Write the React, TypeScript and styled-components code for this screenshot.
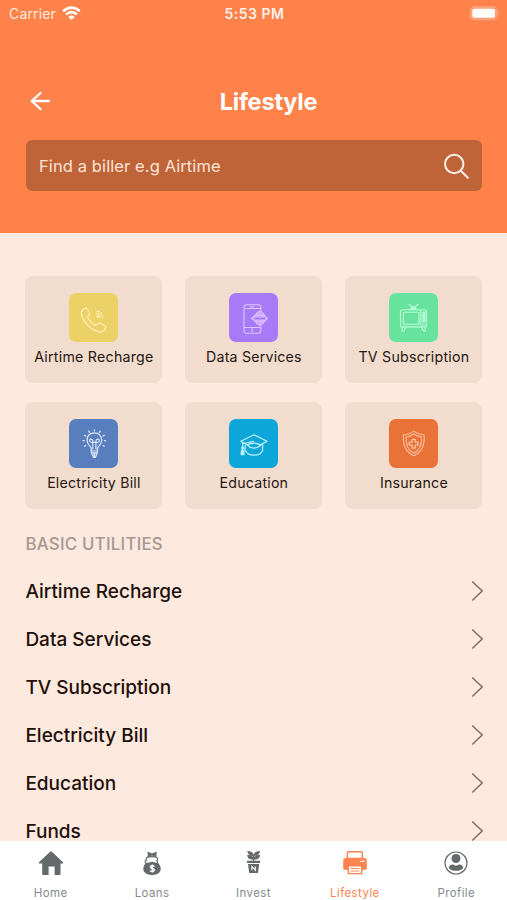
import React from "react";
import styled, { createGlobalStyle } from "styled-components";

const GlobalStyle = createGlobalStyle`
  * { box-sizing: border-box; }
  body { margin: 0; background: #fee9de; font-family: Inter, "Liberation Sans", sans-serif; overflow: hidden; }
`;

const Screen = styled.div`
  width: 507px;
  height: 900px;
  display: flex;
  flex-direction: column;
  background: #fee9de;
  overflow: hidden;
`;

const Header = styled.header`
  height: 233px;
  flex: none;
  background: #ff824b;
  color: #fff;
`;

const StatusBar = styled.div`
  display: grid;
  grid-template-columns: 1fr auto 1fr;
  align-items: center;
  height: 27px;
  padding: 0 7px 0 9px;
`;

const Carrier = styled.div`
  display: flex;
  align-items: center;
  gap: 6px;
  font-size: 14px;
  letter-spacing: 0.15px;
  color: #ffeadf;
`;

const Clock = styled.div`
  font-size: 14px;
  font-weight: 600;
  letter-spacing: 0.5px;
  color: #fff1e9;
`;

const BatterySlot = styled.div`
  display: flex;
  justify-content: flex-end;
`;

const TitleBar = styled.div`
  display: grid;
  grid-template-columns: 28px 1fr 28px;
  align-items: center;
  height: 40px;
  margin: 54px 25px 0 26px;
`;

const Title = styled.h1`
  margin: 0;
  text-align: center;
  font-size: 23.5px;
  line-height: 30px;
  font-weight: 700;
  letter-spacing: -0.2px;
  padding-left: 29px;
  padding-top: 1px;
`;

const Search = styled.div`
  display: flex;
  align-items: center;
  justify-content: space-between;
  height: 51px;
  margin: 19px 25px 0 25.5px;
  padding: 0 12px 0 13.5px;
  border-radius: 6px;
  background: #bf6339;
  color: #ffe5d8;
  font-size: 16.5px;
`;

const SearchText = styled.span`
  letter-spacing: 0.1px;
`;

const Content = styled.main`
  flex: 1;
  min-height: 0;
  overflow: hidden;
  padding: 43px 24.5px 0 25.4px;
`;

const Grid = styled.section`
  display: grid;
  grid-template-columns: repeat(3, 137px);
  grid-auto-rows: 107px;
  gap: 19px 23px;
`;

const Card = styled.div`
  display: flex;
  flex-direction: column;
  align-items: center;
  padding-top: 17px;
  border-radius: 8px;
  background: #f2dcce;
`;

const Tile = styled.div<{ $color: string }>`
  width: 49px;
  height: 49px;
  border-radius: 7px;
  background: ${(p) => p.$color};
  svg { display: block; }
`;

const CardLabel = styled.div<{ $track: number }>`
  margin-top: 5px;
  font-size: 14.2px;
  line-height: 20px;
  font-weight: 400;
  letter-spacing: ${(p) => p.$track}px;
  white-space: nowrap;
  color: #251711;
`;

const SectionTitle = styled.h2`
  margin: 22px 0 0;
  font-size: 16.8px;
  line-height: 26px;
  font-weight: 500;
  letter-spacing: 0.27px;
  color: #a69791;
`;

const Row = styled.div`
  display: flex;
  align-items: center;
  justify-content: space-between;
  height: 48px;
  font-size: 19px;
  font-weight: 500;
  color: #210f09;
`;

const List = styled.div`
  padding-top: 10px;
`;

const RowLabel = styled.span`
  letter-spacing: 0px;
`;

const Nav = styled.nav`
  flex: none;
  height: 59px;
  display: grid;
  grid-template-columns: repeat(5, 1fr);
  background: #fff;
`;

const NavItem = styled.div<{ $active?: boolean }>`
  display: flex;
  flex-direction: column;
  align-items: center;
  padding-top: 8px;
  color: ${(p) => (p.$active ? "#fd8350" : "#64696b")};
`;

const NavLabel = styled.span<{ $active?: boolean }>`
  margin-top: 8px;
  font-size: 11.5px;
  line-height: 16px;
  letter-spacing: 0.4px;
  color: ${(p) => (p.$active ? "#fd8350" : "#85898b")};
`;

const Wifi = () => (
  <svg width="19" height="15" viewBox="0 0 19 15" fill="none" stroke="#fff" strokeWidth="2.5">
    <path d="M1.1 5.3Q9.5-2 17.9 5.3" />
    <path d="M4 8.5Q9.5 3.8 15 8.5" />
    <path d="M6.3 10.9Q9.5 8.3 12.7 10.9L9.5 14Z" fill="#fff" stroke="none" />
  </svg>
);

const Battery = () => (
  <svg width="31" height="15" viewBox="0 0 31 15">
    <rect x="1.5" y=".8" width="26.5" height="13" rx="4" fill="#ff9d73" stroke="#ffa883" />
    <rect x="3.3" y="2.8" width="22.7" height="9" rx="2" fill="#fff" />
    <path d="M29 5.2Q31 7.2 29 9.4Z" fill="#ffb18f" />
  </svg>
);

const Back = () => (
  <svg width="28" height="28" viewBox="0 0 28 28" fill="none" stroke="#fff" strokeWidth="2.3" strokeLinecap="round" strokeLinejoin="round">
    <path d="M23 14H6M14.5 6 5.7 14l8.8 8.1" />
  </svg>
);

const SearchIcon = () => (
  <svg width="28" height="28" viewBox="0 0 28 28" fill="none" stroke="#fff0e8" strokeWidth="2" strokeLinecap="round">
    <circle cx="12.2" cy="12" r="9.2" />
    <path d="m18.8 18.7 7 7" />
  </svg>
);

const Chevron = () => (
  <svg width="13" height="22" viewBox="0 0 13 22" fill="none" stroke="#7b6860" strokeWidth="1.3">
    <path d="m2.2 1.5 10 9.5-10 9.5" />
  </svg>
);

const PhoneIcon = () => (
  <svg width="49" height="49" viewBox="0 0 49 49" fill="none" stroke="#fff2bf" strokeWidth="1.1" strokeLinecap="round" strokeLinejoin="round">
    <path d="M15.3 15.4c1.2-.7 2.3-.3 3 .9l2 3.2c.7 1.2.2 2.3-.9 3.1-1.3.9-.7 2.3.3 3.7 1.6 2.2 3.5 4.1 5.8 5.4 1.2.7 2.2.6 3-.4.8-1.1 2-1.5 3.3-.8l3.5 2.1c1.3.8 1.7 2 1 3.2-2 3.4-5.3 4-9 2.3-6.4-2.9-11.2-7.6-14-14.1-1.5-3.6-1.4-6.7 2-8.6ZM27.6 20.6c2 .8 3 2.3 3 4.3M27.6 18c3.5.6 5.6 3.1 6.2 6.9M27.6 22.9c.8.4 1.1 1 1.1 1.8" />
  </svg>
);

const DataIcon = () => (
  <svg width="49" height="49" viewBox="0 0 49 49" fill="none" stroke="#dfc6ff" strokeWidth="1.1">
    <rect x="15" y="11.7" width="16.7" height="28.5" rx="2.4" />
    <path d="M15 15.5h16.7M15 34.5h16.7M20.5 13.8h5M23.3 35v4" />
    <path d="M22 25.5c4.5-1 5.4-7.3 9-7.3 3.7 0 4 6.3 8 7.3-4 1-4.3 6.5-8 6.5s-4.5-5.5-9-6.5Z" fill="#c79fff" />
    <path d="M30.8 18.5v5M30.8 27v4.7M27.7 20.3v3M27.7 27.4v3M34.2 20.3v3M34.2 27.4v3M25.8 22.8h10.4M25.6 28.2h10.8" strokeWidth=".8" />
    <path d="M26 25.5h10" stroke="#a979f4" strokeWidth="1.4" />
  </svg>
);

const TvIcon = () => (
  <svg width="49" height="49" viewBox="0 0 49 49" fill="none" stroke="#b9ffd8" strokeWidth="1.1" strokeLinejoin="round">
    <rect x="11.5" y="16.7" width="26" height="17.2" rx="2" />
    <rect x="14.3" y="19.3" width="15.7" height="12" rx="1" />
    <path d="M31.8 17v17M34 19h2v10h-2ZM35 20v8M33 31.2h3.5M13.7 34l-.9 4h2.1l2-4M32.7 34l1.8 4h2.1l-.9-4M23.8 15.2l-4-4.2M25 15.2l4.3-4.2M20 16.5h8.6M21.5 15.2h6" />
    <circle cx="24.5" cy="15" r="1.5" fill="#b9ffd8" />
  </svg>
);

const BulbIcon = () => (
  <svg width="49" height="49" viewBox="0 0 49 49" fill="none" stroke="#dfeaff" strokeWidth="1.15" strokeLinecap="round">
    <path d="M22.2 32v-2.4c0-2.8-4.2-3.5-4.2-8.6 0-4.3 3.1-7.2 7.4-7.2s7.3 3.1 7.3 7.3c0 4.9-4.2 5.8-4.2 8.6V32Z" />
    <path d="M22.4 32v2.2l2.3 4.2h1.6l2-4.2V32M22.7 33.9h5.3M23.8 30v-6.6c-4.2.8-4.1-4-1.2-3.2 1.1.3 1.3 1.8 1.2 3.2h3.1c-.1-1.5.2-2.9 1.3-3.2 2.9-.8 2.9 4-1.3 3.2V30" />
    <path d="M25.4 35v3" strokeWidth="1.8" />
    <path d="M25.4 10.7v1.2M19.7 12.1l.8 1.3M31.1 12.1l-.8 1.3M15.4 16.3l1.3.8M35.2 16.3l-1.2.8M14 21.6h1.3M35.3 21.6h1.4M15.4 27.3l1.3-.8M35.3 27.3l-1.3-.8" />
  </svg>
);

const CapIcon = () => (
  <svg width="49" height="49" viewBox="0 0 49 49" fill="none" stroke="#bdf2ff" strokeWidth="1.25" strokeLinecap="round" strokeLinejoin="round">
    <path d="M11.8 22.2 25 15.8l13 6.4-6.5 3.7q-7-3.4-13 0ZM18 26q6.5 6.2 14-.1M16.2 26.5v4.7c1.3 2.8 4.5 5 8.9 5 4.6 0 7.6-2.1 8.5-5v-5.4M15 24.5l9.6-2.2M13.7 23.5v8" />
    <path d="M12.4 31.5h2.4l.2 4h-2.8Z" fill="#bdf2ff" />
    <circle cx="13.7" cy="29" r="1" />
  </svg>
);

const ShieldIcon = () => (
  <svg width="49" height="49" viewBox="0 0 49 49" fill="none" stroke="#ffc2a1" strokeWidth="1.05" strokeLinejoin="round">
    <path d="M24.8 12.2c2.8 2.3 6.4 3.5 10.3 3.6.8 9.8-1.5 17.3-10.3 21-8.8-3.7-11.1-11.2-10.3-21 3.9-.1 7.5-1.3 10.3-3.6Z" />
    <path d="M24.8 15c2.3 1.6 4.8 2.6 7.8 2.9.3 7.6-1.6 13.2-7.8 16.3-6.2-3.1-8.1-8.7-7.8-16.3 3-.3 5.5-1.3 7.8-2.9Z" />
    <path d="M23.2 20.3h3v2.9h2.9v3h-2.9v2.9h-3v-2.9h-2.9v-3h2.9Z" strokeWidth="1.3" />
  </svg>
);

const HomeIcon = () => (
  <svg width="28" height="28" viewBox="0 0 28 28" fill="currentColor">
    <path d="M13.1 2.7q.9-.8 1.8 0L26 13.3q1 1-.4 1.1H23.5v10.7q0 1-1 1h-4.9v-8.5h-6v8.5H6.2q-1 0-1-1V14.4H2.4q-1.4-.1-.4-1.1Z" />
  </svg>
);

const LoansIcon = () => (
  <svg width="28" height="28" viewBox="0 0 28 28">
    <path d="M9.5 8.1c2.4-.4 7.2-.6 9.1.2 1.2.7 1 2.4.2 3.3 1.1.3.8 2.5-.2 3H9.4c-2.9-.7-3.3-2.8-.8-3.5-.8-.9-.6-2.6.9-3Z" fill="white" stroke="currentColor" strokeWidth="1.1" />
    <path d="M9.4 2.5 14 4.4l4.8-1.9-.6 6-4.2-2-4 2Z" fill="currentColor" />
    <path d="M7.5 14.3 14 12.8l6.4 1.5c5 6.2 1.6 11.7-6.4 11.7S2.7 20.4 7.5 14.3Z" fill="currentColor" />
    <path d="M16.7 17.4c-4.3-1.8-6 1.1-2.4 2.1 3.8 1 2.2 4-2.4 2.3M14.3 15.6v7.9" fill="none" stroke="#fff" strokeWidth="1.4" />
  </svg>
);

const InvestIcon = () => (
  <svg width="28" height="28" viewBox="0 0 28 28" fill="currentColor">
    <path d="M8.3 2.1c3.2-.1 5.6 1.2 6.2 3.6.8-2.3 3.2-3.6 6.6-3.6-.3 3.2-2.2 4.7-5.8 4.8v1.2c1.2-1.7 3.2-2.2 5.8-2.2-.2 3.3-2.4 4.6-5.8 4.6v1.3h-1.5v-1.3c-3.4 0-5.4-1.3-5.5-4.6 2.6 0 4.5.5 5.5 2.1V6.9c-3.4-.1-5.2-1.7-5.5-4.8Z" />
    <path d="M8.1 11.8h13v2.3h-13ZM9 14.9h11.2l-1.2 9h-8.8Z" />
    <path d="M12.9 21.2v-3.8l3.4 3.8v-3.8" fill="none" stroke="#fff" strokeWidth="1.1" />
  </svg>
);

const LifestyleIcon = () => (
  <svg width="28" height="28" viewBox="0 0 28 28" fill="currentColor">
    <path d="M6.4 10V3.6q0-.9.9-.9h13q1 0 1 .9V10Z" fill="#fff" stroke="currentColor" strokeWidth="1.4" />
    <path d="M5.4 8.8h17.2q3.2 0 3.2 3v7.4q0 1.6-1.6 1.6H3.8q-1.6 0-1.6-1.6v-7.4q0-3 3.2-3Z" />
    <path d="M19.4 12.4h3.5" stroke="#fff" strokeWidth="1.4" strokeLinecap="round" />
    <path d="M7.3 16.8h13.4v7.8H7.3Z" fill="#fff" stroke="currentColor" strokeWidth="1.4" />
    <path d="M9.7 19.5h8.6M9.7 22h8.6" stroke="currentColor" strokeWidth="1.2" />
  </svg>
);

const ProfileIcon = () => (
  <svg width="28" height="28" viewBox="0 0 28 28">
    <circle cx="14" cy="14" r="11" fill="none" stroke="currentColor" strokeWidth="1.2" />
    <circle cx="14" cy="9.5" r="4.5" fill="currentColor" />
    <path d="M6.7 18.9c.8-3.2 3.6-3.9 5.4-2.8q1.9 1 3.8 0c1.8-1.1 4.6-.4 5.4 2.8-3.2 3.9-11.4 3.9-14.6 0Z" fill="currentColor" />
  </svg>
);

const services = [
  { name: "Airtime Recharge", color: "#ecd167", icon: PhoneIcon, track: 0.25 },
  { name: "Data Services", color: "#a97af7", icon: DataIcon, track: 0.2 },
  { name: "TV Subscription", color: "#68e39d", icon: TvIcon, track: 0.24 },
  { name: "Electricity Bill", color: "#587ebd", icon: BulbIcon, track: 0.22 },
  { name: "Education", color: "#0da6d8", icon: CapIcon, track: 0.2 },
  { name: "Insurance", color: "#e87237", icon: ShieldIcon, track: 0.2 },
];

const utilities = ["Airtime Recharge", "Data Services", "TV Subscription", "Electricity Bill", "Education", "Funds"];

const tabs = [
  { name: "Home", icon: HomeIcon },
  { name: "Loans", icon: LoansIcon },
  { name: "Invest", icon: InvestIcon },
  { name: "Lifestyle", icon: LifestyleIcon, active: true },
  { name: "Profile", icon: ProfileIcon },
];

export default function App() {
  return (
    <>
      <GlobalStyle />
      <Screen>
        <Header>
          <StatusBar>
            <Carrier>Carrier<Wifi /></Carrier>
            <Clock>5:53 PM</Clock>
            <BatterySlot><Battery /></BatterySlot>
          </StatusBar>
          <TitleBar>
            <Back />
            <Title>Lifestyle</Title>
          </TitleBar>
          <Search>
            <SearchText>Find a biller e.g Airtime</SearchText>
            <SearchIcon />
          </Search>
        </Header>
        <Content>
          <Grid>
            {services.map(({ name, color, icon: Icon, track }) => (
              <Card key={name}>
                <Tile $color={color}><Icon /></Tile>
                <CardLabel $track={track}>{name}</CardLabel>
              </Card>
            ))}
          </Grid>
          <SectionTitle>BASIC UTILITIES</SectionTitle>
          <List>
            {utilities.map((name) => (
              <Row key={name}>
                <RowLabel>{name}</RowLabel>
                <Chevron />
              </Row>
            ))}
          </List>
        </Content>
        <Nav>
          {tabs.map(({ name, icon: Icon, active }) => (
            <NavItem key={name} $active={active}>
              <Icon />
              <NavLabel $active={active}>{name}</NavLabel>
            </NavItem>
          ))}
        </Nav>
      </Screen>
    </>
  );
}
